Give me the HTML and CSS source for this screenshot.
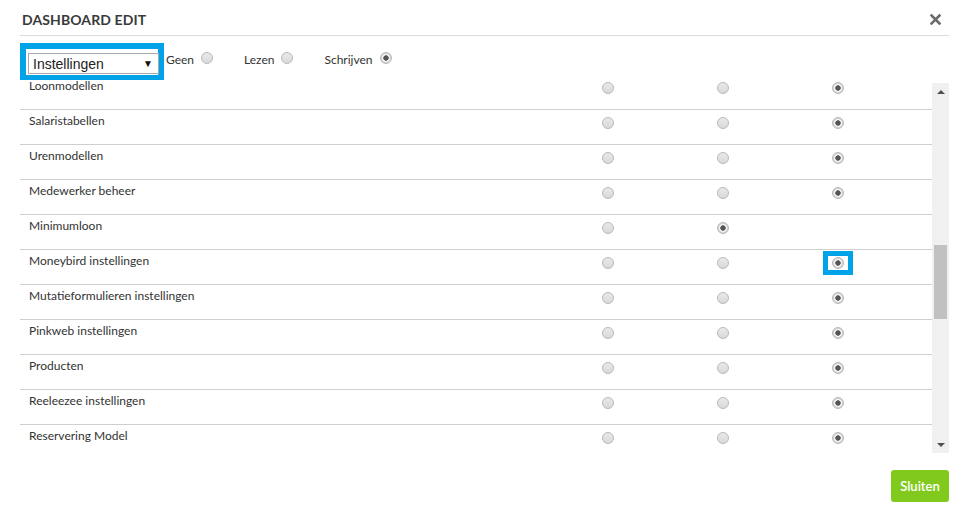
FILE: index.html
```html
<!DOCTYPE html>
<html lang="nl">
<head>
  <meta charset="UTF-8">
  <title>Dashboard edit</title>
  <link rel="stylesheet" href="styles.css">
</head>
<body>
  <div class="modal">
    <div class="modal-header">
      <h2>DASHBOARD EDIT</h2>
      <span class="close">
        <svg width="11" height="11" viewBox="0 0 11 11"><path d="M1.5 1.5 L9.5 9.5 M9.5 1.5 L1.5 9.5" stroke="#6b6b6b" stroke-width="2.6" stroke-linecap="square"/></svg>
      </span>
    </div>

    <div class="toolbar">
      <div class="mark mark-select">
        <div class="select">
          <span>Instellingen</span>
          <span class="caret">&#9660;</span>
        </div>
      </div>
      <div class="opt"><span>Geen</span><i class="radio"></i></div>
      <div class="opt"><span>Lezen</span><i class="radio"></i></div>
      <div class="opt"><span>Schrijven</span><i class="radio on"></i></div>
    </div>

    <div class="list-wrap">
      <div class="list">
        <div class="rows">
          <div class="row"><span class="name">Loonmodellen</span><i class="radio"></i><i class="radio"></i><i class="radio on"></i></div>
          <div class="row"><span class="name">Salaristabellen</span><i class="radio"></i><i class="radio"></i><i class="radio on"></i></div>
          <div class="row"><span class="name">Urenmodellen</span><i class="radio"></i><i class="radio"></i><i class="radio on"></i></div>
          <div class="row"><span class="name">Medewerker beheer</span><i class="radio"></i><i class="radio"></i><i class="radio on"></i></div>
          <div class="row"><span class="name">Minimumloon</span><i class="radio"></i><i class="radio on"></i></div>
          <div class="row"><span class="name">Moneybird instellingen</span><i class="radio"></i><i class="radio"></i><span class="mark mark-radio"><i class="radio on"></i></span></div>
          <div class="row"><span class="name">Mutatieformulieren instellingen</span><i class="radio"></i><i class="radio"></i><i class="radio on"></i></div>
          <div class="row"><span class="name">Pinkweb instellingen</span><i class="radio"></i><i class="radio"></i><i class="radio on"></i></div>
          <div class="row"><span class="name">Producten</span><i class="radio"></i><i class="radio"></i><i class="radio on"></i></div>
          <div class="row"><span class="name">Reeleezee instellingen</span><i class="radio"></i><i class="radio"></i><i class="radio on"></i></div>
          <div class="row"><span class="name">Reservering Model</span><i class="radio"></i><i class="radio"></i><i class="radio on"></i></div>
        </div>
      </div>
      <div class="scrollbar">
        <div class="sb-btn"><span class="arrow-up"></span></div>
        <div class="sb-track"><div class="sb-thumb"></div></div>
        <div class="sb-btn"><span class="arrow-down"></span></div>
      </div>
    </div>

    <div class="footer">
      <button class="btn-close">Sluiten</button>
    </div>
  </div>
</body>
</html>
```

FILE: styles.css
```css
* {
  box-sizing: border-box;
}
body {
  margin: 0;
  background: #fff;
  font-family: 'Lato', sans-serif;
  color: #333;
}
.modal {
  padding: 0 20px;
}
.modal-header {
  height: 36px;
  display: flex;
  align-items: center;
  justify-content: space-between;
  border-bottom: 1px solid #dcdcdc;
  padding: 0 8px 0 2px;
}
.modal-header h2 {
  margin: 3px 0 0;
  font-size: 14px;
  font-weight: 700;
  color: #3a3a3a;
  letter-spacing: 0.1px;
}
.close {
  display: flex;
  margin-top: 3px;
}

/* top filter row */
.toolbar {
  display: flex;
  align-items: flex-start;
  height: 43px;
  padding-top: 7px;
}
.mark {
  border: 6px solid #00a2e8;
  background: #fff;
}
.mark-select {
  width: 144px;
  height: 37px;
  padding: 4px 0 0 2px;
  border-bottom-width: 5px;
}
.select {
  width: 131px;
  height: 21px;
  border: 1px solid #a9a9a9;
  display: flex;
  align-items: center;
  justify-content: space-between;
  padding: 0 5px 0 4px;
  font-family: 'Liberation Sans', Arial, sans-serif;
  font-size: 14px;
  color: #222;
}
.caret {
  font-size: 10px;
  color: #111;
}
.opt {
  display: flex;
  align-items: center;
  gap: 7px;
  margin: 9px 0 0 2px;
  font-size: 12px;
}
.opt + .opt {
  margin-left: 31px;
}
.opt .radio {
  margin-top: -3px;
}

/* radios */
.radio {
  display: inline-block;
  width: 12px;
  height: 12px;
  border-radius: 50%;
  border: 1px solid #b9b9b9;
  background: linear-gradient(#e9e9e9, #d9d9d9);
}
.radio.on {
  background: radial-gradient(circle, #555 0, #555 2.4px, #f4f4f4 3px, #f4f4f4 3.6px, #d4d4d4 4.4px);
}

/* list with scrollbar */
.list-wrap {
  display: flex;
  height: 374px;
}
.list {
  flex: 1;
  overflow: hidden;
}
.rows {
  margin-top: -4px;
}
.row {
  display: grid;
  grid-template-columns: 582px 115px 115px 1fr;
  align-items: start;
  height: 35px;
  border-bottom: 1px solid #cfcfcf;
}
.row .name {
  padding: 4px 0 0 9px;
  font-size: 12px;
  line-height: 14px;
}
.row .radio {
  margin-top: 7px;
}
.mark-radio {
  width: 30px;
  height: 24px;
  border-width: 5px;
  margin: 1px 0 0 -9px;
  display: flex;
  align-items: center;
  justify-content: center;
}
.mark-radio .radio {
  margin: 0;
}
.scrollbar {
  width: 17px;
  margin-top: 4px;
  background: #f0f0f0;
  display: flex;
  flex-direction: column;
}
.sb-btn {
  height: 17px;
  display: flex;
  align-items: center;
  justify-content: center;
}
.arrow-up,
.arrow-down {
  width: 0;
  height: 0;
  border-left: 4px solid transparent;
  border-right: 4px solid transparent;
}
.arrow-up {
  border-bottom: 4px solid #505050;
}
.arrow-down {
  border-top: 4px solid #505050;
}
.sb-track {
  flex: 1;
  padding: 0 2px;
}
.sb-thumb {
  margin-top: 145px;
  height: 74px;
  background: #c1c1c1;
}

.footer {
  display: flex;
  justify-content: flex-end;
  padding-top: 17px;
}
.btn-close {
  width: 58px;
  height: 32px;
  border: none;
  border-radius: 3px;
  background: #82c91e;
  color: #fff;
  font-family: 'Lato', sans-serif;
  font-size: 13px;
  font-weight: 600;
  cursor: pointer;
}
```
